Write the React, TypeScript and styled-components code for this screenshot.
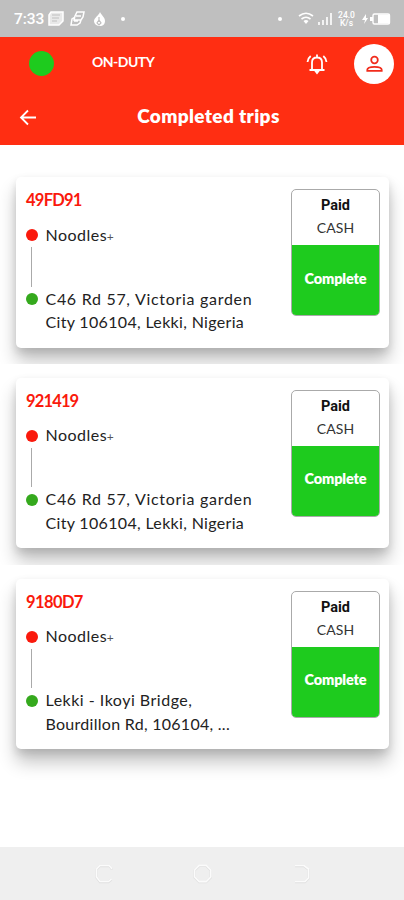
import React from "react";
import styled, { createGlobalStyle } from "styled-components";

const GlobalStyle = createGlobalStyle`
  * { box-sizing: border-box; }
  body { margin: 0; background: #fff; font-family: Lato, "Open Sans", sans-serif; }
`;

const Screen = styled.div`
  width: 404px;
  height: 900px;
  display: flex;
  flex-direction: column;
  overflow: hidden;
  background: #fff;
`;

const StatusBar = styled.div`
  height: 37px;
  flex: none;
  display: flex;
  justify-content: space-between;
  padding: 1px 13px 0 14px;
  align-items: center;
  background: #bfbfbf;
  color: #fff;
`;

const StatusGroup = styled.div`
  display: flex;
  align-items: center;
`;

const Clock = styled.span`
  font: 500 15.5px/18px Roboto, sans-serif;
  letter-spacing: -0.1px;
  width: 33px;
  white-space: nowrap;
`;

const Dot = styled.span<{ $before: number; $after?: number }>`
  width: 4px;
  height: 4px;
  border-radius: 50%;
  background: #fff;
  margin-left: ${(p) => p.$before}px;
  margin-right: ${(p) => p.$after ?? 0}px;
`;

const Speed = styled.span`
  width: 19px;
  margin: 0 5px 0 3px;
  font: 500 8.5px/8.5px Roboto, sans-serif;
  text-align: center;
`;

const Header = styled.header`
  height: 107.5px;
  flex: none;
  background: #ff2e12;
  color: #fff;
`;

const DutyRow = styled.div`
  height: 53px;
  display: flex;
  align-items: center;
  padding: 0 10px 0 29px;
`;

const DutyLight = styled.span`
  width: 25px;
  height: 25px;
  border-radius: 50%;
  background: #1ecb1e;
`;

const DutyLabel = styled.span`
  margin-left: 38px;
  margin-top: -4px;
  flex: 1;
  font-size: 14px;
  font-weight: 700;
  letter-spacing: -0.5px;
`;

const Avatar = styled.div`
  width: 40px;
  height: 40px;
  margin-left: 26px;
  border-radius: 50%;
  background: #fff;
  display: grid;
  place-items: center;
`;

const TitleRow = styled.div`
  height: 54px;
  display: grid;
  grid-template-columns: 56px 1fr 56px;
  align-items: center;
`;

const BackSlot = styled.div`
  padding: 2px 0 0 19px;
  height: 20px;
`;

const Title = styled.h1`
  margin: -3px 0 0 13px;
  text-align: center;
  font-size: 19px;
  line-height: 26px;
  font-weight: 800;
  letter-spacing: 0.35px;
`;

const TripList = styled.main`
  flex: 1;
  padding-top: 18.8px;
`;

const TripSlot = styled.section`
  height: 200.7px;
  padding: 14px 15px 0 16px;
  background: #fff;
`;

const TripCard = styled.article`
  height: 170.5px;
  border-radius: 5px;
  background: #fff;
  box-shadow: 0 13px 18px rgba(0, 0, 0, 0.24), 0 4px 8px rgba(0, 0, 0, 0.12);
  display: flex;
  justify-content: space-between;
  padding: 12px 9px 0 10px;
`;

const TripCode = styled.h2<{ $spacing: number }>`
  margin: 0;
  font-size: 16.5px;
  line-height: 23px;
  font-weight: 700;
  letter-spacing: ${(p) => p.$spacing}px;
  color: #fa190c;
`;

const Route = styled.div`
  display: grid;
  grid-template-columns: 12px 1fr;
  column-gap: 7.5px;
  margin-top: 10.5px;
  font-size: 16px;
  line-height: 23.5px;
  color: #222;
`;

const Stop = styled.span<{ $color: string }>`
  width: 12px;
  height: 12px;
  margin-top: 6.5px;
  border-radius: 50%;
  background: ${(p) => p.$color};
`;

const Connector = styled.span`
  width: 1px;
  height: 39.5px;
  margin: 1px 0 0 5px;
  background: #aaa;
`;

const Place = styled.div`
  white-space: nowrap;
  letter-spacing: 0.5px;
`;

const Plus = styled.span`
  margin-left: -0.5px;
  font-size: 12px;
  line-height: 1;
  color: #555;
`;

const Line = styled.div<{ $spacing: number }>`
  letter-spacing: ${(p) => p.$spacing}px;
`;

const StatusBox = styled.aside`
  width: 89px;
  height: 127px;
  border: 1px solid #aaa;
  border-radius: 5px;
  overflow: hidden;
  text-align: center;
`;

const Payment = styled.div`
  height: 55px;
  padding-top: 5px;
`;

const Paid = styled.div`
  font: 700 14.5px/22px Roboto, sans-serif;
  color: #111;
`;

const Method = styled.div`
  font-size: 14px;
  line-height: 21px;
  letter-spacing: 0.1px;
  color: #333;
`;

const Complete = styled.div`
  height: 71px;
  padding-bottom: 5px;
  display: grid;
  place-items: center;
  background: #1ecb1e;
  color: #fff;
  font-size: 14.5px;
  font-weight: 800;
  letter-spacing: -0.15px;
`;

const NavBar = styled.nav`
  height: 53.5px;
  flex: none;
  display: flex;
  justify-content: space-between;
  padding: 16.5px 93px 0 94px;
  background: #efefef;
`;

type Trip = { code: string; codeSpacing: number; lines: [string, number][] };

const trips: Trip[] = [
  { code: "49FD91", codeSpacing: -0.75, lines: [["C46 Rd 57, Victoria garden", 0.7], ["City 106104, Lekki, Nigeria", 0.33]] },
  { code: "921419", codeSpacing: -0.85, lines: [["C46 Rd 57, Victoria garden", 0.7], ["City 106104, Lekki, Nigeria", 0.33]] },
  { code: "9180D7", codeSpacing: -0.6, lines: [["Lekki - Ikoyi Bridge,", 0.5], ["Bourdillon Rd, 106104, ...", 0.28]] },
];

const NotificationIcons = () => (
  <svg width="72" height="18" viewBox="0 0 72 18" fill="none" stroke="#fff" strokeWidth="1.5">
    <path d="M4 2h12v9l-4 4H2V5z" fill="#fff" fillOpacity=".65" />
    <path d="M5 5h8M5 8h7M5 11h5" stroke="#bfbfbf" strokeWidth="1" />
    <path d="M28 6l2-4h7l-1 5-2 3h-7zM28 7l-3 2-1 6h6l3-2 1-3M29 6h5M27 11h4" />
    <path d="M53 2c1 3 5 5 5 9 0 3-2 5-5 5s-6-2-6-5c0-3 5-6 6-9z" fill="#fff" stroke="none" />
    <path d="M52 7v3l2 3-2 2-2-2 2-3" stroke="#bfbfbf" strokeWidth="1.2" />
  </svg>
);

const SignalIcons = () => (
  <svg width="36" height="16" viewBox="0 0 36 16" fill="none" stroke="#fff" strokeWidth="1.6">
    <path d="M1 5q7-5.5 14 0M3.5 8q4.5-3.5 9 0" />
    <path d="M5.5 10q2.5-2 5 0L8 13z" fill="#fff" stroke="none" />
    <path d="M21 14v-3M25 14V9M29 14V6M33 14V2" />
  </svg>
);

const BatteryIcon = () => (
  <svg width="30" height="14" viewBox="0 0 30 14">
    <path d="M5 2L1 8h3l-1 4 4-6H5zM9 5h3v4H9z" fill="#fff" />
    <rect x="12" y="2" width="16.5" height="10" rx="1.5" fill="none" stroke="#fff" strokeWidth="1.4" />
    <path d="M17 2.5h12v9H17z" fill="#fff" />
  </svg>
);

const BellIcon = () => (
  <svg width="22" height="22" viewBox="0 0 22 22" fill="none" stroke="#fff" strokeWidth="1.8">
    <path d="M3.5 17h15M6 16.5V9.5C6 6.5 8 4.5 11 4.5s5 2 5 5v7M11 1.5V4M1.5 9c.2-2.6 1.2-4.4 3.2-6M20.5 9c-.2-2.6-1.2-4.4-3.2-6" />
    <path d="M9.5 18.5h3L11 20.5z" fill="#fff" strokeWidth="1.2" />
  </svg>
);

const PersonIcon = () => (
  <svg width="18" height="18" viewBox="0 0 18 18" fill="none" stroke="#f12b1b" strokeWidth="1.8">
    <circle cx="9.5" cy="5" r="3.3" />
    <path d="M2.3 15.8v-1c0-4 14.4-4 14.4 0v1z" />
  </svg>
);

const BackIcon = () => (
  <svg width="18" height="17" viewBox="0 0 18 17" fill="none" stroke="#fff" strokeWidth="1.8">
    <path d="M17 8.5H2.5M9 1.5l-7 7 7 7" />
  </svg>
);

const NavIcon = ({ d }: { d: string }) => (
  <svg width="20" height="21" viewBox="0 0 20 21" fill="none">
    <path d={d} stroke="#e0e0e0" strokeWidth="2.4" transform="translate(0 .5)" />
    <path d={d} stroke="#fbfbfb" strokeWidth="1.6" />
  </svg>
);

export default function App() {
  return (
    <>
      <GlobalStyle />
      <Screen>
        <StatusBar>
          <StatusGroup>
            <Clock>7:33</Clock>
            <NotificationIcons />
            <Dot $before={2} />
          </StatusGroup>
          <StatusGroup>
            <Dot $before={0} $after={16} />
            <SignalIcons />
            <Speed>24.0 K/s</Speed>
            <BatteryIcon />
          </StatusGroup>
        </StatusBar>
        <Header>
          <DutyRow>
            <DutyLight />
            <DutyLabel>ON-DUTY</DutyLabel>
            <BellIcon />
            <Avatar><PersonIcon /></Avatar>
          </DutyRow>
          <TitleRow>
            <BackSlot><BackIcon /></BackSlot>
            <Title>Completed trips</Title>
          </TitleRow>
        </Header>
        <TripList>
          {trips.map((trip) => (
            <TripSlot key={trip.code}>
              <TripCard>
                <div>
                  <TripCode $spacing={trip.codeSpacing}>{trip.code}</TripCode>
                  <Route>
                    <Stop $color="#fa190c" />
                    <Place>Noodles<Plus>+</Plus></Place>
                    <Connector />
                    <span />
                    <Stop $color="#35a91d" />
                    <Place>
                      {trip.lines.map(([text, spacing]) => (
                        <Line key={text} $spacing={spacing}>{text}</Line>
                      ))}
                    </Place>
                  </Route>
                </div>
                <StatusBox>
                  <Payment>
                    <Paid>Paid</Paid>
                    <Method>CASH</Method>
                  </Payment>
                  <Complete>Complete</Complete>
                </StatusBox>
              </TripCard>
            </TripSlot>
          ))}
        </TripList>
        <NavBar>
          <NavIcon d="M17.5 6V5L15 2.5H6L2.5 6v8L6 18.5h8.5l3-2.5" />
          <NavIcon d="M6.2 2.4h7L17.8 7v7l-4.6 4.6h-7L1.6 14V7z" />
          <NavIcon d="M4 2.5h9L17.5 6v9L14 18.5H4" />
        </NavBar>
      </Screen>
    </>
  );
}
